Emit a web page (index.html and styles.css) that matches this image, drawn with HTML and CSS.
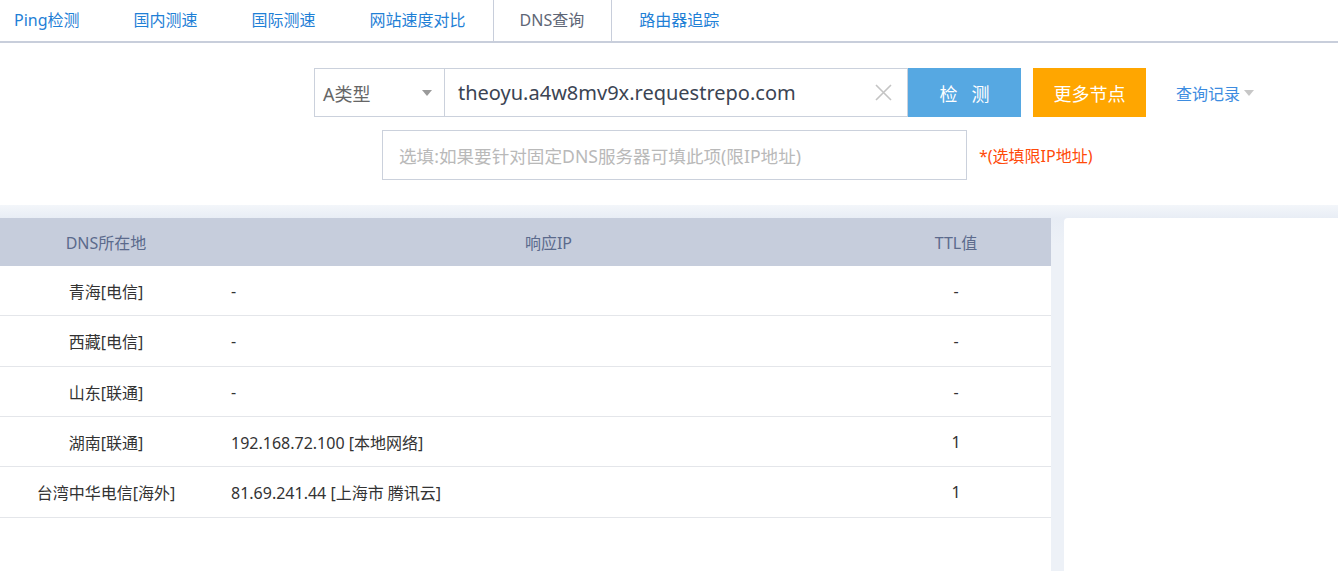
FILE: index.html
```html
<!DOCTYPE html>
<html lang="zh-CN">
<head>
<meta charset="utf-8">
<title>DNS查询</title>
<link rel="stylesheet" href="styles.css">
</head>
<body>
<nav class="tabs">
  <a class="tab first">Ping检测</a>
  <a class="tab">国内测速</a>
  <a class="tab">国际测速</a>
  <a class="tab">网站速度对比</a>
  <a class="tab active">DNS查询</a>
  <a class="tab">路由器追踪</a>
</nav>

<section class="search">
  <div class="row-main">
    <div class="select">
      <span>A类型</span>
      <span class="caret"></span>
    </div>
    <div class="host">
      <span class="host-text">theoyu.a4w8mv9x.requestrepo.com</span>
      <svg class="clear" width="17" height="17" viewBox="0 0 17 17"><path d="M1 1 L16 16 M16 1 L1 16" stroke="#c4c4c4" stroke-width="1.6" fill="none"/></svg>
    </div>
    <button class="btn btn-check">检&nbsp;&nbsp;&nbsp;测</button>
    <button class="btn btn-more">更多节点</button>
    <a class="history">查询记录<span class="caret small"></span></a>
  </div>
  <div class="row-sub">
    <div class="server">选填:如果要针对固定DNS服务器可填此项(限IP地址)</div>
    <span class="hint">*(选填限IP地址)</span>
  </div>
</section>

<main class="content">
  <div class="panel-left">
    <div class="thead">
      <div class="c1">DNS所在地</div>
      <div class="c2 h2">响应IP</div>
      <div class="c3">TTL值</div>
    </div>
    <div class="tr"><div class="c1">青海[电信]</div><div class="c2">-</div><div class="c3">-</div></div>
    <div class="tr tall"><div class="c1">西藏[电信]</div><div class="c2">-</div><div class="c3">-</div></div>
    <div class="tr"><div class="c1">山东[联通]</div><div class="c2">-</div><div class="c3">-</div></div>
    <div class="tr"><div class="c1">湖南[联通]</div><div class="c2">192.168.72.100 [本地网络]</div><div class="c3">1</div></div>
    <div class="tr tall"><div class="c1">台湾中华电信[海外]</div><div class="c2">81.69.241.44 [上海市 腾讯云]</div><div class="c3">1</div></div>
  </div>
  <div class="panel-right"></div>
</main>
</body>
</html>
```

FILE: styles.css
```css
* { box-sizing: border-box; }
html, body { margin: 0; padding: 0; }
body {
  font-family: "Noto Sans", "Noto Sans CJK SC", sans-serif;
  background: #ffffff;
  color: #333333;
  width: 1338px;
  height: 571px;
  overflow: hidden;
  display: flex;
  flex-direction: column;
}

/* Tabs */
.tabs {
  display: flex;
  height: 43px;
  border-bottom: 2px solid #c8cedb;
}
.tab {
  padding: 0 27px;
  line-height: 41px;
  font-size: 16px;
  color: #1f80d6;
  white-space: nowrap;
}
.tab.first { margin-left: -13px; }
.tab.active {
  color: #5e6676;
  border-left: 1px solid #c8cedb;
  border-right: 1px solid #c8cedb;
  padding: 0 27px 0 26px;
}

/* Search */
.search {
  padding: 25px 0 25px 0;
}
.row-main {
  display: flex;
  align-items: center;
  padding-left: 314px;
  height: 49px;
}
.select {
  width: 131px;
  height: 49px;
  border: 1px solid #cbd1dc;
  display: flex;
  align-items: center;
  justify-content: space-between;
  padding: 0 12px 0 8px;
  font-size: 18px;
  color: #666666;
}
.caret {
  width: 0;
  height: 0;
  border-left: 5px solid transparent;
  border-right: 5px solid transparent;
  border-top: 6px solid #9a9a9a;
}
.caret.small {
  display: inline-block;
  margin-left: 4px;
  vertical-align: middle;
  border-top-color: #c7c7c7;
  position: relative;
  top: -2px;
}
.host {
  width: 463px;
  height: 49px;
  border: 1px solid #cbd1dc;
  border-left: none;
  display: flex;
  align-items: center;
  justify-content: space-between;
  padding: 0 15px 0 13px;
}
.host-text {
  font-size: 20px;
  color: #3b4453;
}
.btn {
  height: 49px;
  width: 113px;
  border: none;
  color: #ffffff;
  font-family: inherit;
  font-size: 18px;
  padding: 0;
}
.btn-check { background: #56a8e2; }
.btn-more { background: #ffa600; margin-left: 12px; }
.history {
  margin-left: 30px;
  font-size: 16px;
  color: #3d8ce0;
  white-space: nowrap;
}

.row-sub {
  display: flex;
  align-items: center;
  margin-top: 13px;
  padding-left: 382px;
}
.server {
  width: 585px;
  height: 50px;
  border: 1px solid #cbd1dc;
  display: flex;
  align-items: center;
  padding-left: 16px;
  font-size: 17.6px;
  color: #b9b9b9;
}
.hint {
  margin-left: 12px;
  font-size: 16px;
  color: #ff4a0a;
}

/* Content */
.content {
  flex: 1;
  display: flex;
  gap: 13px;
  padding-top: 13px;
  background: linear-gradient(#f3f6fa, #e8edf5 13px, #edf1f7 40px);
}
.panel-left {
  width: 1051px;
  background: #ffffff;
}
.panel-right {
  flex: 1;
  background: #ffffff;
  border-radius: 4px 0 0 0;
}
.thead, .tr {
  display: grid;
  grid-template-columns: 212px 1fr 190px;
  align-items: center;
}
.thead {
  height: 48px;
  background: #c6cddc;
  color: #5b6a8c;
  font-size: 16px;
}
.tr {
  height: 50px;
  border-bottom: 1px solid #e4e6ea;
  font-size: 16px;
  color: #333333;
}
.tr.tall { height: 51px; }
.c1, .c3 { text-align: center; }
.c2 { padding-left: 19px; }
.thead .h2 { text-align: center; padding-left: 24px; }
```
